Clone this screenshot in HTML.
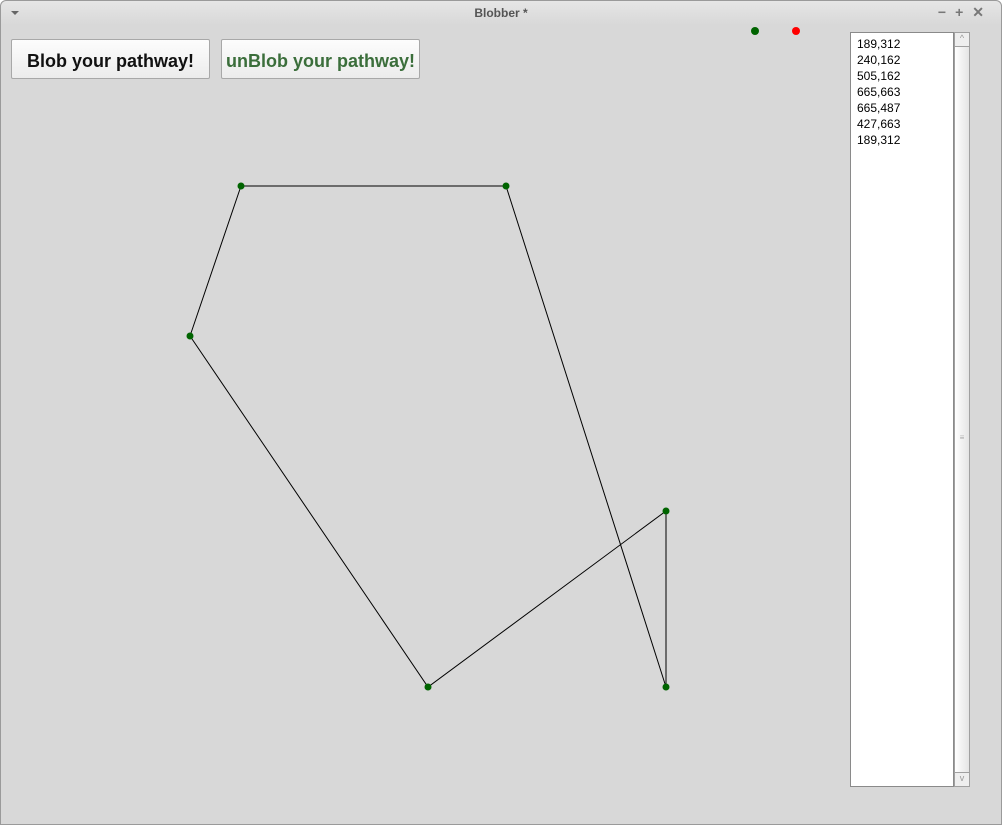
<!DOCTYPE html>
<html><head><style>
body{margin:0;width:1002px;height:825px;overflow:hidden;font-family:"Liberation Sans",sans-serif;}
.win{position:absolute;left:0;top:0;width:1000px;height:823px;background:#d8d8d8;border:1px solid #9a9a9a;border-radius:6px 6px 0 0;}
.title{position:absolute;left:0;top:0;width:1000px;height:24px;background:linear-gradient(#e6e6e6,#d8d8d8);border-radius:6px 6px 0 0;}
.title span{position:absolute;left:0;width:1000px;text-align:center;top:5px;font-size:12px;font-weight:bold;color:#555;}
.btn{position:absolute;top:38px;height:38px;background:linear-gradient(#fdfdfd,#ececec);border:1px solid #a8a8a8;border-radius:2px;font-weight:bold;font-size:18px;text-align:center;line-height:42px;}
.list{position:absolute;left:849px;top:31px;width:104px;height:755px;background:#fff;border:1px solid #8a8a8a;font-size:12px;line-height:16px;box-sizing:border-box;padding-top:3px;}
.list div{padding-left:6px;}
.sb{position:absolute;left:953px;top:31px;width:14px;height:753px;border:1px solid #a0a0a0;background:linear-gradient(90deg,#fff,#e4e4e4);}
</style></head><body>
<div class="win">
<div class="title"><span>Blobber *</span>
<div style="position:absolute;left:10px;top:10px;border-left:4px solid transparent;border-right:4px solid transparent;border-top:4px solid #666"></div>
<div style="position:absolute;right:8px;top:3px;font-size:14px;color:#777;font-weight:bold;letter-spacing:9px">−+✕</div>
</div>
<div class="btn" style="left:10px;width:197px;color:#111">Blob your pathway!</div>
<div class="btn" style="left:220px;width:197px;color:#3b6e3b">unBlob your pathway!</div>
<div class="list">
<div>189,312</div><div>240,162</div><div>505,162</div><div>665,663</div><div>665,487</div><div>427,663</div><div>189,312</div></div>
<div class="sb">
<div style="height:13px;border-bottom:1px solid #a0a0a0;background:#eee;text-align:center;font-size:9px;color:#999">^</div>
<div style="position:absolute;top:400px;width:14px;text-align:center;font-size:8px;color:#aaa">≡</div>
<div style="position:absolute;bottom:0;width:14px;height:13px;border-top:1px solid #a0a0a0;background:#eee;text-align:center;font-size:9px;color:#999">v</div>
</div>
</div>
<svg style="position:absolute;left:0;top:0" width="1002" height="825">
<polyline points="190,336 241,186 506,186 666,687 666,511 428,687 190,336" fill="none" stroke="#000" stroke-width="1"/>
<g fill="#006400">
<circle cx="190" cy="336" r="3.5"/><circle cx="241" cy="186" r="3.5"/><circle cx="506" cy="186" r="3.5"/><circle cx="666" cy="687" r="3.5"/><circle cx="666" cy="511" r="3.5"/><circle cx="428" cy="687" r="3.5"/>
<circle cx="755" cy="31" r="4"/></g>
<circle cx="796" cy="31" r="4" fill="#f00"/>
</svg>
</body></html>
